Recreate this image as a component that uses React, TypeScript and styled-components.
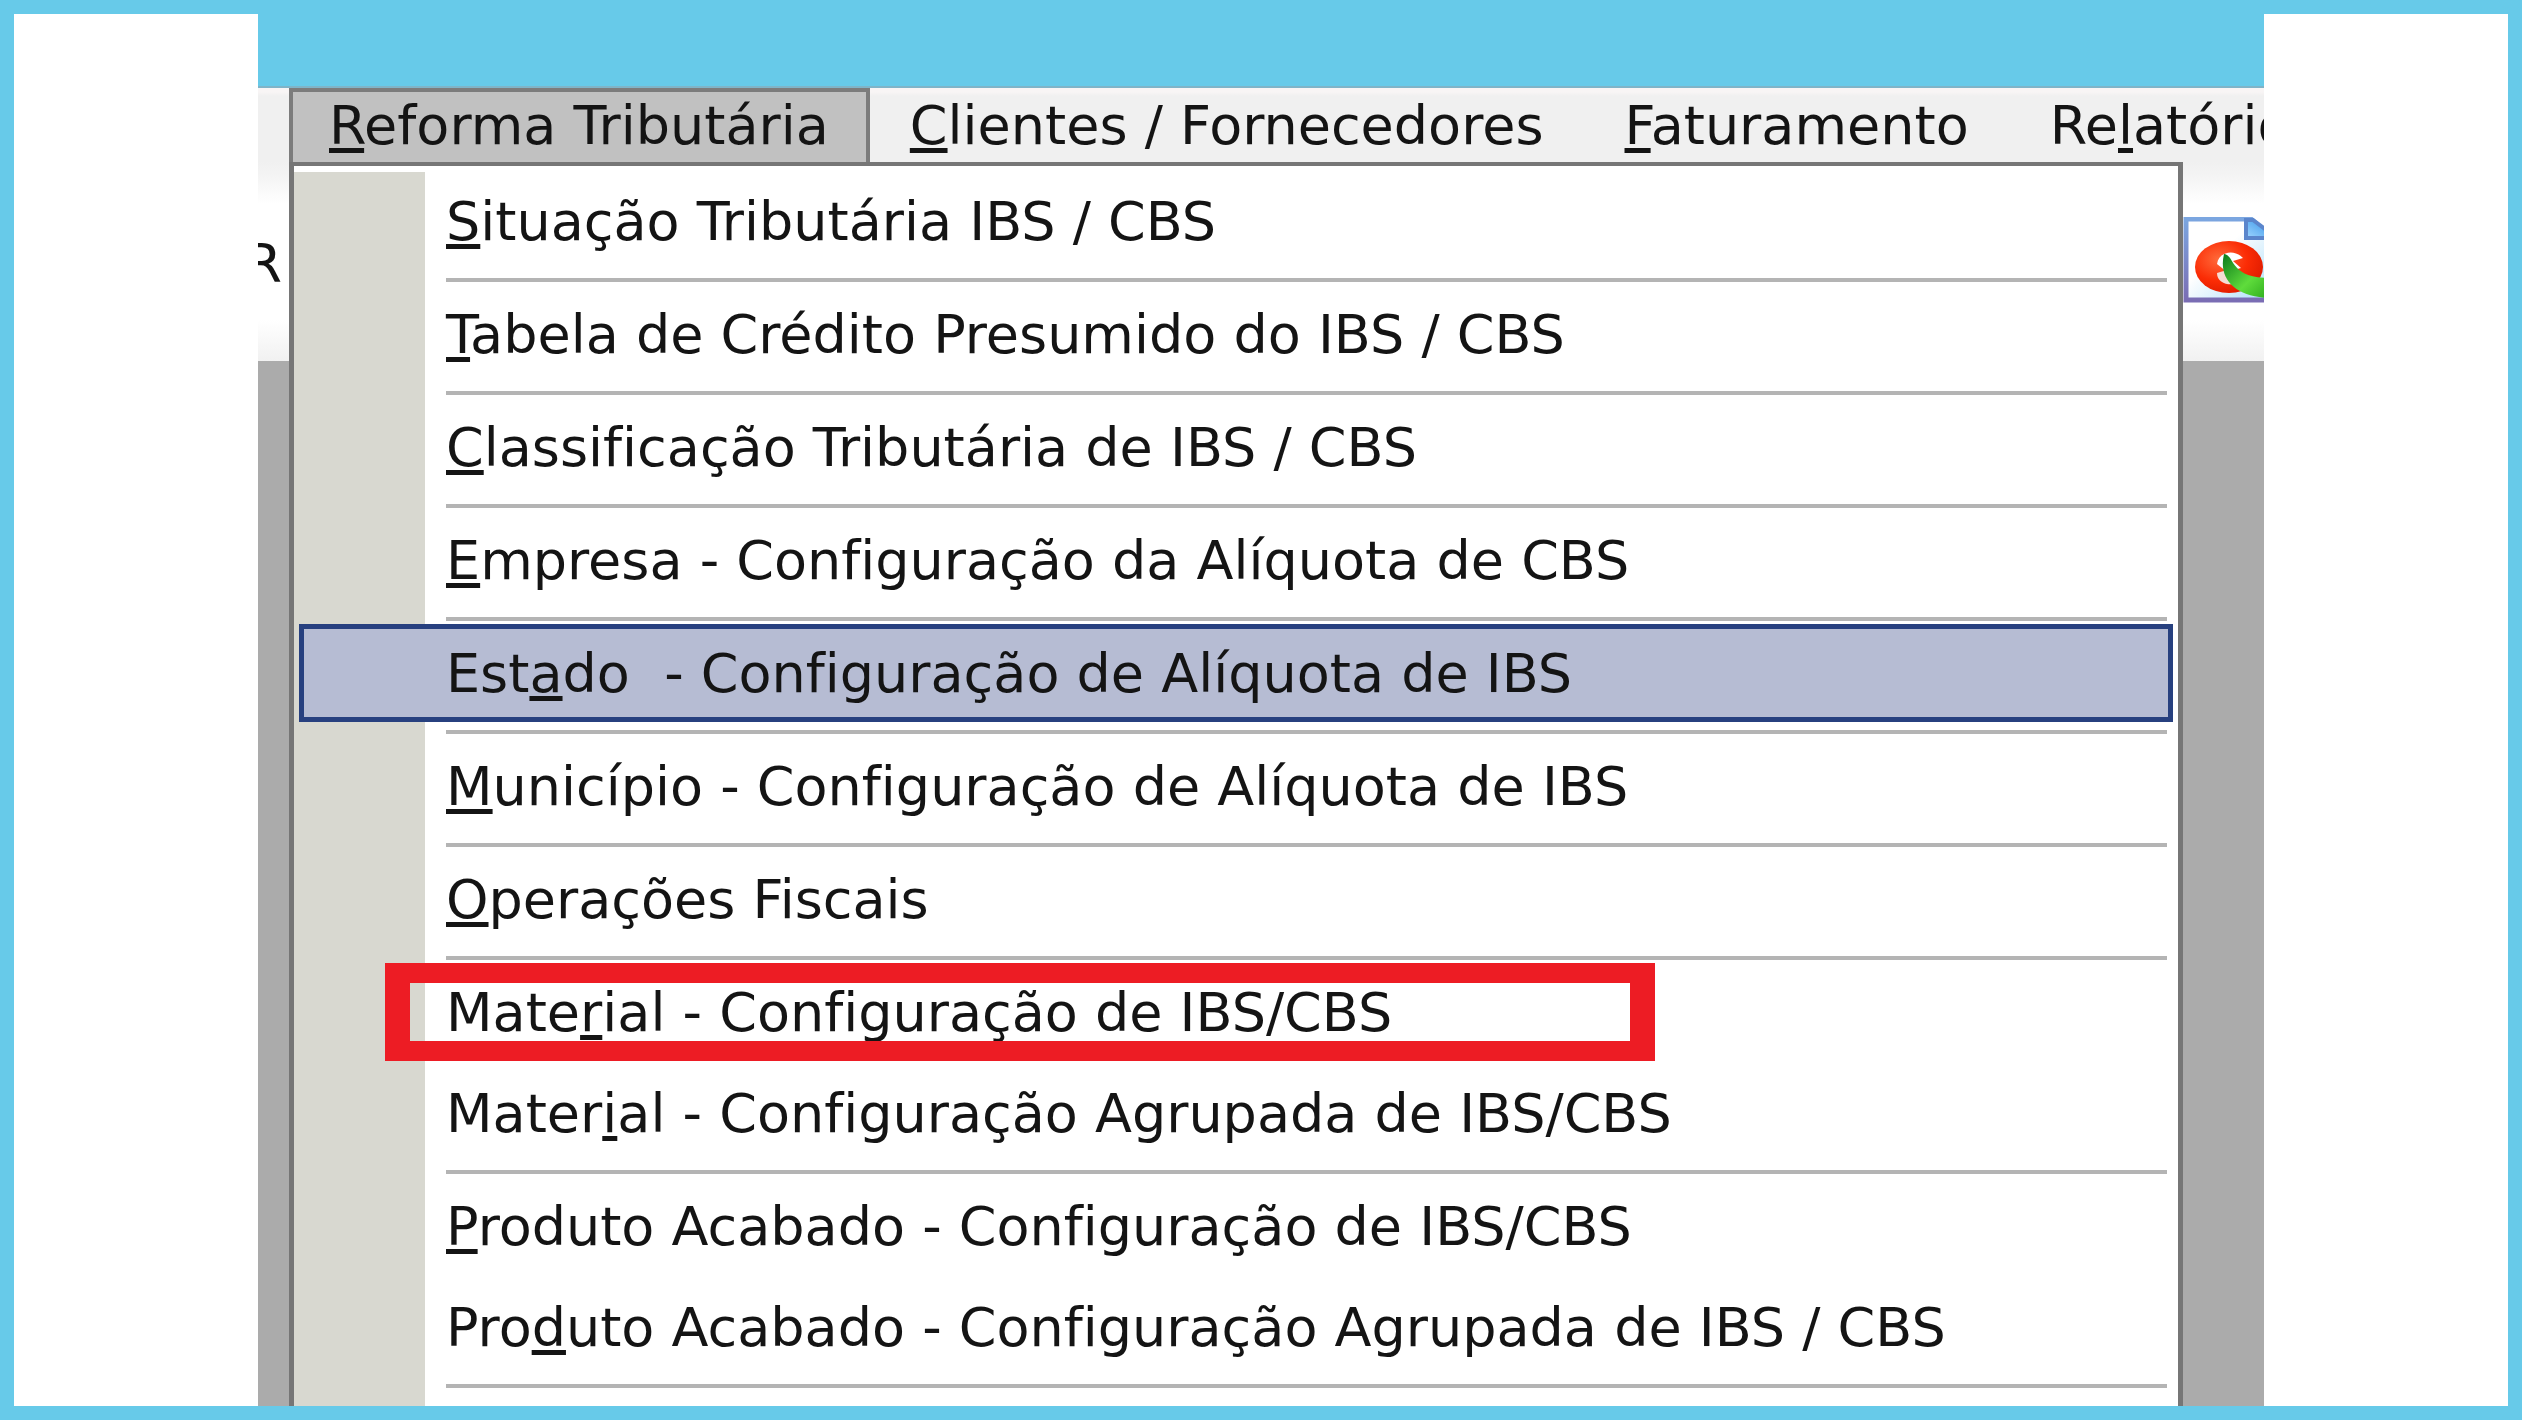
import React from 'react';
import styled, { createGlobalStyle, css } from 'styled-components';

const Global = createGlobalStyle`
  * { box-sizing: border-box; }
  body { margin: 0; }
`;

const Page = styled.main`
  height: 100vh;
  overflow: hidden;
  border: 14px solid #67cae9;
  background: #fff;
  padding: 0 244px;
  font-family: 'DejaVu Sans', Verdana, sans-serif;
  font-size: 54px;
  font-variant-ligatures: none;
  line-height: 64px;
  color: #141414;
`;

const AppWindow = styled.section`
  position: relative;
  display: flex;
  flex-direction: column;
  height: 100%;
  overflow: hidden;
  background: #ababab;
`;

const TitleBar = styled.header`
  flex: none;
  height: 74px;
  background: #67cae9;
  border-bottom: 2px solid #7fb4c8;
`;

const MenuBar = styled.nav`
  flex: none;
  display: flex;
  height: 74px;
  padding-left: 31px;
  overflow: hidden;
  background: linear-gradient(#f8f5f5 4px, #f0f0f0 8px);
`;

const MenuBarButton = styled.button<{ $open?: boolean }>`
  flex: none;
  height: 74px;
  padding: 0 37px 2px 36px;
  border: 4px solid transparent;
  border-bottom: 0;
  background: transparent;
  font: inherit;
  font-variant-ligatures: none;
  color: inherit;
  text-align: left;
  white-space: pre;
  ${(p) => p.$open && css`
    border-color: #7c7c7c;
    background: #c1c1c1;
  `}
`;

const Toolbar = styled.div`
  flex: none;
  display: flex;
  justify-content: space-between;
  align-items: center;
  height: 199px;
  padding-bottom: 4px;
  background: linear-gradient(#f0f0f0, #f4f4f4 14px, #fff 42px, #fff 158px, #f1f1f1);
`;

const ToolLabel = styled.span`
  display: flex;
  justify-content: flex-end;
  width: 24px;
  padding-top: 8px;
  overflow: hidden;
`;

const ToolIcon = styled.svg`
  width: 81px;
  height: 86px;
`;

const Dropdown = styled.div`
  position: absolute;
  top: 148px;
  bottom: 0;
  left: 31px;
  right: 81px;
  overflow: hidden;
  padding-top: 6px;
  border: solid #767676;
  border-width: 4px 5px 0;
  background: #fff;
`;

const MenuList = styled.ul`
  min-height: 100%;
  margin: 0;
  padding: 0 5px;
  list-style: none;
  background: linear-gradient(to right, #d8d8d0 131px, #fff 131px);
`;

const Entry = styled.li`
  position: relative;
  padding-bottom: 3px;
`;

const MenuItem = styled.button<{ $active?: boolean }>`
  display: block;
  width: 100%;
  height: 98px;
  padding: 2px 0 0 142px;
  border: 5px solid transparent;
  background: transparent;
  font: inherit;
  font-variant-ligatures: none;
  color: inherit;
  text-align: left;
  white-space: pre;
  ${(p) => p.$active && css`
    border-color: #27407f;
    background: #b6bcd3;
  `}
`;

const Separator = styled.li`
  height: 4px;
  margin: 5px 6px 3px 147px;
  background: #b4b4b4;
`;

const Marker = styled.span`
  position: absolute;
  top: 0;
  left: 86px;
  width: 1270px;
  height: 98px;
  border: solid #ed1c24;
  border-width: 20px 25px;
  pointer-events: none;
`;

const Key = styled.u`
  text-decoration-thickness: 5px;
  text-underline-offset: 4px;
  text-decoration-skip-ink: none;
`;

/* "&" precedes the access key, as in native menu captions. */
function Caption({ text }: { text: string }) {
  const at = text.indexOf('&');
  return (
    <>
      {text.slice(0, at)}
      <Key>{text[at + 1]}</Key>
      {text.slice(at + 2)}
    </>
  );
}

type Item = { text: string; active?: boolean; marked?: boolean; joined?: boolean };

const items: Item[] = [
  { text: '&Situação Tributária IBS / CBS' },
  { text: '&Tabela de Crédito Presumido do IBS / CBS' },
  { text: '&Classificação Tributária de IBS / CBS' },
  { text: '&Empresa - Configuração da Alíquota de CBS' },
  { text: 'Est&ado  - Configuração de Alíquota de IBS', active: true },
  { text: '&Município - Configuração de Alíquota de IBS' },
  { text: '&Operações Fiscais' },
  { text: 'Mate&rial - Configuração de IBS/CBS', marked: true, joined: true },
  { text: 'Mater&ial - Configuração Agrupada de IBS/CBS' },
  { text: '&Produto Acabado - Configuração de IBS/CBS', joined: true },
  { text: 'Pro&duto Acabado - Configuração Agrupada de IBS / CBS' },
];

function DocumentIcon() {
  return (
    <ToolIcon viewBox="0 0 81 86" aria-hidden="true">
      <defs>
        <linearGradient id="sheet" x1="0" y1="0" x2="1" y2="1">
          <stop offset="0.4" stopColor="#fff" />
          <stop offset="1" stopColor="#a8dcfa" />
        </linearGradient>
        <linearGradient id="edge" x1="0" y1="0" x2="0" y2="1">
          <stop offset="0" stopColor="#7ba6e0" />
          <stop offset="1" stopColor="#7a6db4" />
        </linearGradient>
        <linearGradient id="fold" x1="0" y1="1" x2="1" y2="0">
          <stop offset="0" stopColor="#9fd6ff" />
          <stop offset="1" stopColor="#2f8fe6" />
        </linearGradient>
        <radialGradient id="ball" cx="0.35" cy="0.35" r="0.7">
          <stop offset="0" stopColor="#ff6a3a" />
          <stop offset="0.6" stopColor="#fb2c05" />
          <stop offset="1" stopColor="#e01c00" />
        </radialGradient>
        <linearGradient id="leaf" x1="0" y1="0" x2="1" y2="1">
          <stop offset="0" stopColor="#0d7a1c" />
          <stop offset="0.6" stopColor="#5fdc3c" />
          <stop offset="1" stopColor="#2fae1e" />
        </linearGradient>
      </defs>
      <path d="M3 2H68L90 22V83H3Z" fill="url(#sheet)" stroke="url(#edge)" strokeWidth="5" />
      <path d="M63 3H70L90 18V21H63Z" fill="url(#fold)" stroke="#5b86cc" strokeWidth="4" />
      <ellipse cx="46" cy="50" rx="34" ry="26" fill="url(#ball)" />
      <path d="M34 47C36 34 52 32 60 41L50 44L58 51L44 55Z" fill="#fff" />
      <path d="M34 56C34 67 48 70 58 65L44 53Z" fill="#f6dcd4" />
      <path d="M41 37C52 38 46 60 84 61V81C52 79 35 62 41 37Z" fill="url(#leaf)" />
    </ToolIcon>
  );
}

export default function App() {
  return (
    <Page>
      <Global />
      <AppWindow>
        <TitleBar />
        <MenuBar>
          <MenuBarButton $open aria-expanded="true"><Caption text="&Reforma Tributária" /></MenuBarButton>
          <MenuBarButton><Caption text="&Clientes / Fornecedores" /></MenuBarButton>
          <MenuBarButton><Caption text="&Faturamento" /></MenuBarButton>
          <MenuBarButton><Caption text="Re&latórios" /></MenuBarButton>
        </MenuBar>
        <Toolbar>
          <ToolLabel>R</ToolLabel>
          <DocumentIcon />
        </Toolbar>
        <Dropdown>
          <MenuList>
            {items.map((item) => (
              <React.Fragment key={item.text}>
                <Entry>
                  <MenuItem $active={item.active}><Caption text={item.text} /></MenuItem>
                  {item.marked && <Marker />}
                </Entry>
                {!item.joined && <Separator role="separator" />}
              </React.Fragment>
            ))}
          </MenuList>
        </Dropdown>
      </AppWindow>
    </Page>
  );
}
